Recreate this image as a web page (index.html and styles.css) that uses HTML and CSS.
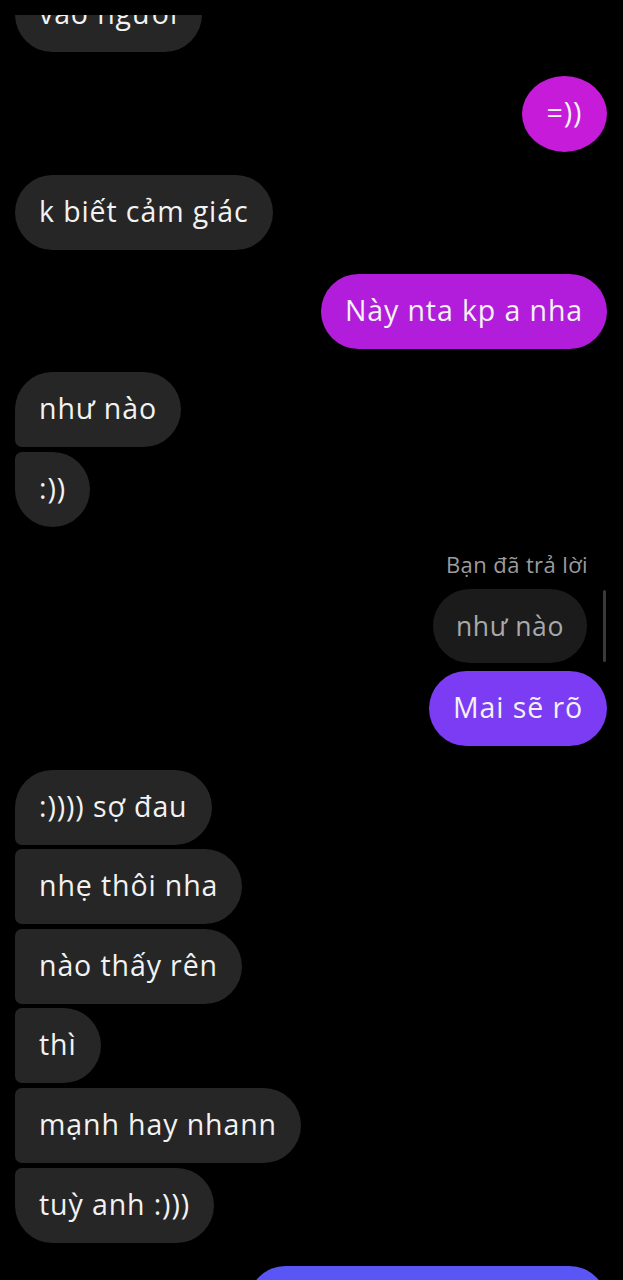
FILE: index.html
```html
<!DOCTYPE html>
<html lang="vi">
<head>
<meta charset="utf-8">
<title>Chat</title>
<link rel="stylesheet" href="styles.css">
</head>
<body>
<div class="viewport">
<main class="chat">
  <div class="group in">
    <div class="bubble in single">vào người</div>
  </div>
  <div class="group out">
    <div class="bubble out magenta single">=))</div>
  </div>
  <div class="group in">
    <div class="bubble in single">k biết cảm giác</div>
  </div>
  <div class="group out">
    <div class="bubble out purple single">Này nta kp a nha</div>
  </div>
  <div class="group in">
    <div class="bubble in first">như nào</div>
    <div class="bubble in last">:))</div>
  </div>
  <div class="group out reply-group">
    <div class="reply-label">Bạn đã trả lời</div>
    <div class="reply-row">
      <div class="bubble quoted single">như nào</div>
      <div class="reply-bar"></div>
    </div>
    <div class="bubble out violet single">Mai sẽ rõ</div>
  </div>
  <div class="group in">
    <div class="bubble in first">:)))) sợ đau</div>
    <div class="bubble in middle">nhẹ thôi nha</div>
    <div class="bubble in middle">nào thấy rên</div>
    <div class="bubble in middle">thì</div>
    <div class="bubble in middle">mạnh hay nhann</div>
    <div class="bubble in last">tuỳ anh :)))</div>
  </div>
  <div class="group out">
    <div class="bubble out blue single wide">&nbsp;</div>
  </div>
</main>
</div>
</body>
</html>
```

FILE: styles.css
```css
html, body {
  margin: 0;
  padding: 0;
  background: #000;
}

body {
  width: 623px;
  height: 1280px;
  overflow: hidden;
  box-sizing: border-box;
  padding-top: 15px;
  font-family: "Open Sans", "Noto Sans", "Liberation Sans", sans-serif;
}

.viewport {
  height: 1265px;
  overflow: hidden;
}

.chat {
  display: flex;
  flex-direction: column;
  gap: 23.5px;
  padding: 0 16px 0 15px;
  margin-top: -38px;
}

.group {
  display: flex;
  flex-direction: column;
  gap: 4.6px;
}

.group.in {
  align-items: flex-start;
}

.group.out {
  align-items: flex-end;
}

.bubble {
  box-sizing: border-box;
  height: 75px;
  padding: 18px 24px 21px;
  font-size: 28.5px;
  letter-spacing: 0.9px;
  line-height: 36px;
  color: #f2f2f2;
  border-radius: 38px;
  white-space: nowrap;
}

.bubble.in {
  background: #262626;
}

.bubble.in.first {
  border-bottom-left-radius: 7px;
}

.bubble.in.middle {
  border-top-left-radius: 7px;
  border-bottom-left-radius: 7px;
}

.bubble.in.last {
  border-top-left-radius: 7px;
}

.bubble.magenta {
  background: #c61bd8;
  width: 85px;
  height: 76px;
  padding-left: 0;
  padding-right: 0;
  text-align: center;
  border-radius: 50%;
}

.bubble.purple {
  background: #b21ddc;
}

.bubble.violet {
  background: #7b3cf4;
}

.bubble.blue {
  background: #5a56f6;
}

.bubble.wide {
  width: 359px;
}

.reply-group {
  gap: 0;
}

.reply-label {
  font-size: 22px;
  letter-spacing: 0.4px;
  line-height: 28px;
  color: #9c9c9c;
  padding-right: 19px;
  margin-top: 0;
}

.reply-row {
  display: flex;
  align-items: center;
  gap: 16px;
  margin-top: 11px;
  margin-right: 1px;
}

.bubble.quoted {
  background: #1b1b1b;
  color: #a9a9a9;
  height: 74px;
  font-size: 26.5px;
  letter-spacing: 0.6px;
  padding: 19px 23px 19px;
}

.reply-bar {
  width: 3px;
  height: 72px;
  border-radius: 2px;
  background: #3a3a3a;
}

.reply-group .bubble.violet {
  margin-top: 8px;
}
```
